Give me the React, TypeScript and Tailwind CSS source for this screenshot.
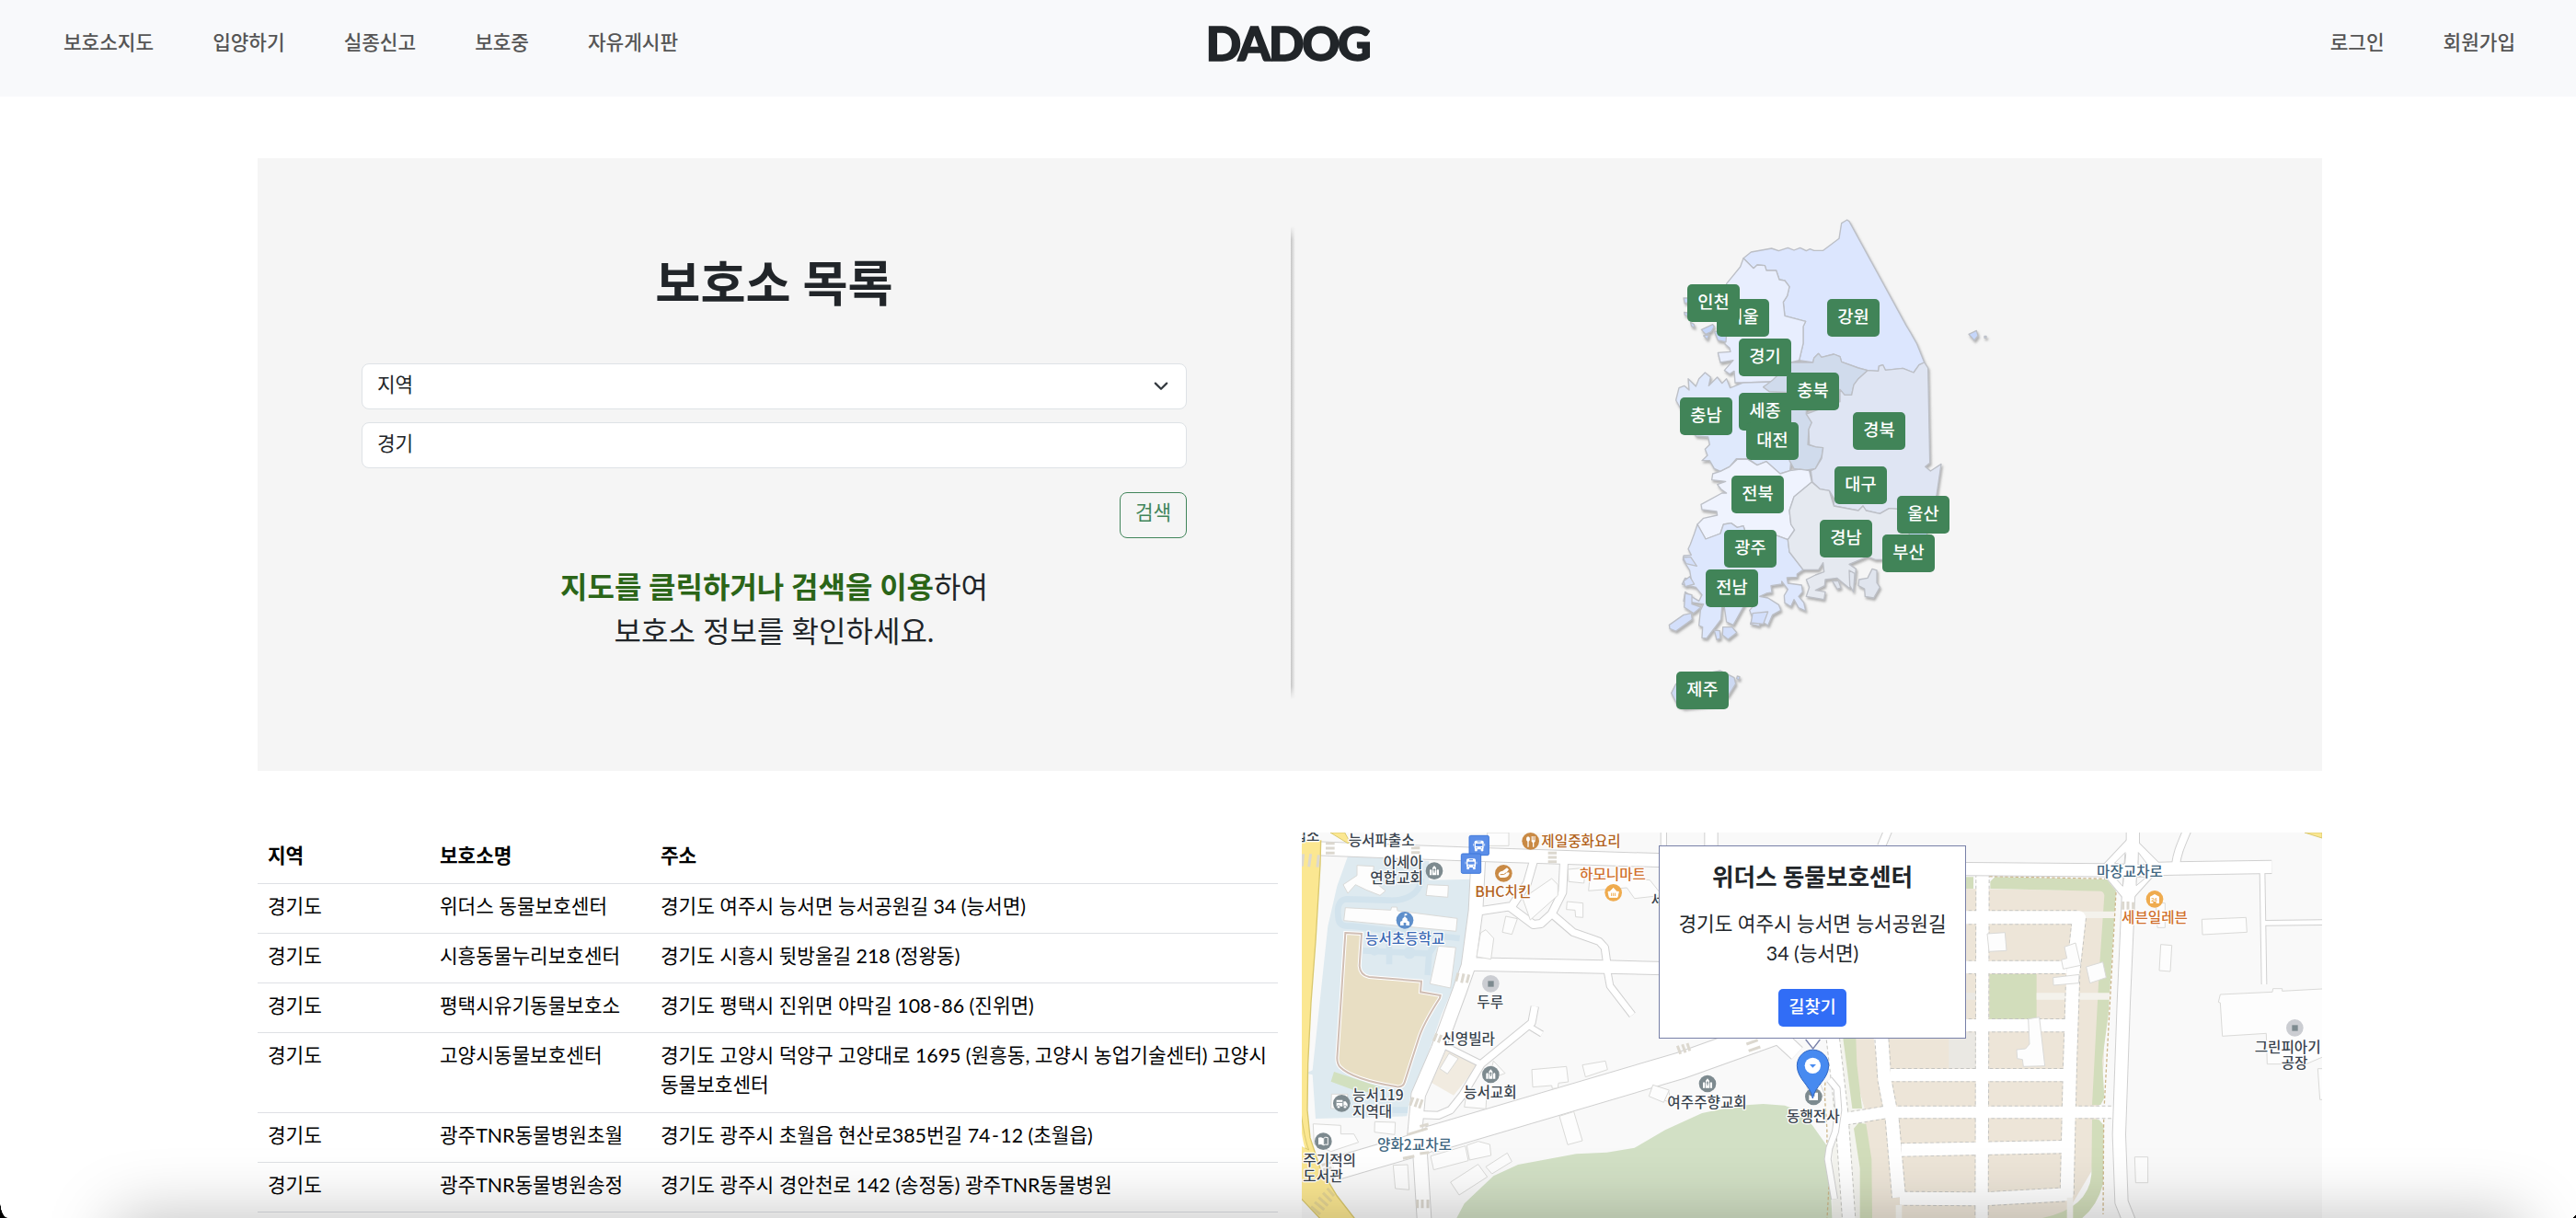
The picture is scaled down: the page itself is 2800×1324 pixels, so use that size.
import React from "react";

const leftNav = ["보호소지도", "입양하기", "실종신고", "보호중", "자유게시판"];
const rightNav = ["로그인", "회원가입"];

const shelters: [string, string, string][] = [
  ["경기도", "위더스 동물보호센터", "경기도 여주시 능서면 능서공원길 34 (능서면)"],
  ["경기도", "시흥동물누리보호센터", "경기도 시흥시 뒷방울길 218 (정왕동)"],
  ["경기도", "평택시유기동물보호소", "경기도 평택시 진위면 야막길 108-86 (진위면)"],
  ["경기도", "고양시동물보호센터", "경기도 고양시 덕양구 고양대로 1695 (원흥동, 고양시 농업기술센터) 고양시 동물보호센터"],
  ["경기도", "광주TNR동물병원초월", "경기도 광주시 초월읍 현산로385번길 74-12 (초월읍)"],
  ["경기도", "광주TNR동물병원송정", "경기도 광주시 경안천로 142 (송정동) 광주TNR동물병원"],
];

/* Region pins, positioned on the map canvas in pixels. */
const regions: [string, number, number][] = [
  ["서울", 86, 104.5],
  ["인천", 54, 88.5],
  ["강원", 206, 104.5],
  ["경기", 110, 147.5],
  ["충북", 162, 184.5],
  ["충남", 46, 211.5],
  ["세종", 110, 206.5],
  ["대전", 118, 238.5],
  ["경북", 234, 227.5],
  ["대구", 214, 286.5],
  ["전북", 102, 296.5],
  ["울산", 282, 318.5],
  ["경남", 198, 344.5],
  ["부산", 266, 360.5],
  ["광주", 94, 355.5],
  ["전남", 74, 398.5],
  ["제주", 42, 510],
];

function Header() {
  return (
    <header className="flex h-[105px] items-start justify-between bg-[#f8f9fb] pr-[66px] pl-[69px]">
      <nav className="flex flex-1 gap-16 pt-[30px] text-[21.33px] leading-8 font-medium text-[#555]">
        {leftNav.map((t) => (
          <a key={t}>{t}</a>
        ))}
      </nav>
      <div className="mr-1 h-[60px] pt-[17px] font-['Lato'] text-[50.5px] leading-[60px] font-black tracking-[-2.2px] text-[#212529] [-webkit-text-stroke:1.6px_#212529]">
        DADOG
      </div>
      <nav className="flex flex-1 justify-end gap-16 pt-[30px] text-[21.33px] leading-8 font-medium text-[#555]">
        {rightNav.map((t) => (
          <a key={t}>{t}</a>
        ))}
      </nav>
    </header>
  );
}

function KoreaMap() {
  return (
    <svg className="block h-[570px] w-[420px]" viewBox="0 0 1260 1710">
      <defs>
        <filter id="landShadow" x="-10%" y="-10%" width="120%" height="120%">
          <feDropShadow dx="4" dy="7" stdDeviation="3" floodColor="#777" floodOpacity="0.55" />
        </filter>
      </defs>
      <g filter="url(#landShadow)" stroke="#bcbfc6" strokeWidth="4" strokeLinejoin="round">
        <path fill="#dce6fe" d="M345 182L370 162 437 150 460 158 490 148 510 156 530 148 550 158 562 152 575 157 605 157 657 118 665 68 683 57 690 62 875 400 890 425 910 460 935 522 918 530 900 555 865 541 808 547 800 530 787 534 785 550 750 548 720 540 665 520 660 503 640 495 600 505 590 493 575 508 572 522 527 515 540 460 540 405 548 388 480 370 475 325 488 305 495 275 480 255 462 252 452 222 420 222 415 206 390 204 378 215Z" />
        <path fill="#e8eefe" d="M345 182L378 215 390 204 415 206 420 222 452 222 462 252 480 255 495 275 488 305 475 325 480 370 548 388 540 405 540 460 527 515 500 522 500 560 440 585 345 588 318 588 315 550 300 560 283 548 312 515 270 522 262 490 303 487 300 475 285 462 290 265 335 210Z" />
        <path fill="#c5d6fb" d="M250 420L290 425 288 455 262 450ZM208 415L245 398 250 405 240 422 222 430ZM150 312h14l2 14-12 4ZM152 358l10 2 2 10-10-2ZM172 390l12 8 2 10-10-4ZM215 435l18-4-6 16Z" />
        <path fill="#dfe9fc" d="M345 588L440 585 410 602 430 617 500 620 500 845 497 875 465 885 445 868 420 845 390 857 360 836 322 836 300 862 270 877 250 868 235 842 210 842 228 825 220 805 235 790 230 765 190 762 150 690 125 645 135 605 152 598 168 612 165 575 190 600 200 575 220 555 238 570 232 598 260 570 275 590 290 575 302 605Z" />
        <path fill="#d0dbec" d="M500 522L572 522 575 508 590 493 600 505 640 495 660 503 665 520 720 540 750 548 720 575 705 595 698 628 675 628 660 610 655 660 550 675 550 690 568 718 558 740 555 790 580 797 605 800 600 830 580 868 545 874 510 868 495 842 500 720 500 620 430 617 410 602 440 580Z" />
        <path fill="#dfe5f3" d="M750 548L785 550 787 534 800 530 808 547 865 541 900 555 918 530 935 522 947 540 953 850 938 862 955 876 990 853 975 955 950 1010 850 1000 820 998 790 1015 745 1005 735 990 720 1005 640 990 640 965 625 940 595 935 570 912 565 875 580 868 600 835 605 800 580 797 560 790 558 740 568 718 550 690 660 650 660 610 675 628 698 628 705 595 720 575Z" />
        <path fill="#eff3fe" d="M270 877L300 862 325 838 360 838 390 857 420 845 465 885 497 875 530 870 560 875 568 912 510 960 495 1005 500 1050 512 1068 490 1100 450 1085 350 1070 345 1055 325 1060 305 1046 280 1050 270 1080 222 1098 195 1050 215 1030 260 1020 258 1008 210 1002 207 985 275 948 290 948 272 935 260 920 287 910 242 905 245 885Z" />
        <path fill="#dde7fd" d="M195 1050L222 1098 270 1080 280 1050 305 1046 325 1060 345 1055 350 1070 450 1085 490 1100 495 1140 540 1198 520 1212 520 1222 487 1224 490 1242 535 1248 538 1270 525 1285 542 1305 548 1332 525 1322 510 1295 500 1318 480 1306 478 1282 490 1262 470 1236 470 1245 435 1250 438 1272 420 1275 398 1285 425 1290 460 1312 467 1330 440 1345 425 1380 400 1362 397 1382 368 1375 375 1355 365 1330 385 1308 350 1310 312 1378 290 1368 283 1320 275 1320 272 1360 225 1422 210 1420 212 1385 200 1380 205 1330 215 1310 150 1300 155 1270 175 1285 200 1300 210 1280 190 1255 145 1245 155 1225 175 1230 170 1200 148 1165 150 1152 175 1150 165 1130 172 1115 185 1080Z" />
        <path fill="#d3dffb" d="M103 1378L150 1345 175 1340 178 1360 125 1398 105 1390ZM155 1275l22 5 0 30 30 10-25 20-30-20ZM148 1158l25-2 20 30-35-8ZM250 1395l18 2 2 25-12 4ZM278 1385l30 0 15 18-28 22-18-14ZM150 1235l20-15 15 25-30 8ZM375 1340l50 -5 -15 40 -40-4Z" />
        <path fill="#e5e9f0" d="M568 912L595 935 625 940 640 990 720 1005 735 990 745 1005 790 1015 820 998 850 1000 940 1080 930 1120 800 1165 775 1165 750 1155 690 1180 712 1195 708 1240 690 1258 668 1240 650 1225 612 1230 610 1250 580 1265 612 1270 608 1295 550 1285 560 1255 550 1230 580 1215 608 1205 605 1175 590 1198 540 1198 495 1140 490 1100 512 1068 500 1050 495 1005 510 960Z" />
        <path fill="#e0e5ee" d="M722 1230L750 1225 765 1195 780 1200 780 1240 790 1255 770 1290 742 1285 740 1260 720 1250ZM690 1200l18 10-4 60-12-20ZM635 1235l20 0 8 22-12 4Z" />
        <path fill="#c5d6fb" d="M885 1075L945 1078 935 1110 890 1120ZM1080 430L1105 418 1110 435 1098 450ZM1131 436l6 0 0 6-6 0ZM325 1545l8 2-2 10-8-4Z" />
        <path fill="#cdd9f2" d="M110 1600L125 1570 240 1533 270 1527 315 1550 320 1570 295 1610 250 1640 150 1650 130 1640Z" />
      </g>
    </svg>
  );
}

function SearchPanel() {
  return (
    <section className="mt-[67px] ml-[280px] flex h-[666px] w-[2244px] bg-[#f5f5f5]">
      <div className="flex w-[1123px] shrink-0 flex-col items-center pt-[103px] text-[#212529]">
        <h1 className="text-[53.33px] leading-[64px] font-bold">보호소 목록</h1>
        <form className="mt-[56px] flex w-[897px] flex-col">
          <div className="flex h-[50px] items-center justify-between rounded-lg border border-[#dee2e6] bg-white pr-[18px] pl-4 text-[21.33px]">
            <span className="-mt-0.5">지역</span>
            <svg className="h-[18px] w-[18px]" viewBox="0 0 16 16" fill="none" stroke="#343a40" strokeWidth="2" strokeLinecap="round" strokeLinejoin="round">
              <path d="M2.500 5L8 10.500l5.500-5.500" />
            </svg>
          </div>
          <div className="mt-[14px] flex h-[50px] items-center rounded-lg border border-[#dee2e6] bg-white px-4 text-[21.33px]">
            <span className="-mt-0.5">경기</span>
          </div>
          <button type="button" className="mt-[26px] h-[50px] w-[73px] self-end rounded-lg border border-[#41855a] pb-1 text-[21.33px] text-[#41855a]">
            검색
          </button>
        </form>
        <p className="mt-[29px] text-center text-[32px] leading-[48px]">
          <b className="font-bold text-[#2b6518]">지도를 클릭하거나 검색을 이용</b>하여
          <br />
          보호소 정보를 확인하세요.
        </p>
      </div>
      <div className="mt-[74px] h-[514px] w-[5px] shrink-0 bg-linear-to-r from-[#c4c4c4] to-[#f5f5f5] [mask-image:linear-gradient(transparent,black_14px,black_calc(100%-14px),transparent)]" />
      <div className="flex-1 pt-12 pl-[372px]">
        <div className="relative h-[570px] w-[420px]">
          <KoreaMap />
          {regions.map(([name, x, y]) => (
            <button
              key={name}
              type="button"
              className="absolute h-[41px] w-[57px] rounded-[5px] bg-[#418458] pb-[3px] text-[18.67px] leading-7 font-medium text-white"
              style={{ left: x, top: y }}
            >
              {name}
            </button>
          ))}
        </div>
      </div>
    </section>
  );
}

/* Gives hyphens in street numbers a little more room. */
function Address({ text }: { text: string }) {
  return (
    <>
      {text.split("-").map((part, i) => (
        <React.Fragment key={part}>
          {i > 0 && <span className="px-[1.5px]">-</span>}
          {part}
        </React.Fragment>
      ))}
    </>
  );
}

function ShelterTable() {
  const cell = "px-[11px] pt-[8px] align-top";
  return (
    <table className="mt-px w-[1109px] table-fixed self-start text-left text-[21.33px] leading-8 text-black">
      <colgroup>
        <col className="w-[187px]" />
        <col className="w-[240px]" />
        <col />
      </colgroup>
      <thead>
        <tr className="h-[54px] border-b border-[#dee0e4] font-bold">
          <th className={cell}>지역</th>
          <th className={cell}>보호소명</th>
          <th className={cell}>주소</th>
        </tr>
      </thead>
      <tbody>
        {shelters.map(([region, name, address], i) => (
          <tr key={name} className={i === 3 ? "h-[87px] border-b border-[#dee0e4]" : "h-[54px] border-b border-[#dee0e4]"}>
            <td className={cell}>{region}</td>
            <td className={cell + " whitespace-nowrap"}>{name}</td>
            <td className={cell}>
              <Address text={address} />
            </td>
          </tr>
        ))}
      </tbody>
    </table>
  );
}

/* Minor roads: path and width. */
const roads: [string, number][] = [
  ["M60 97L600 117 1200 136", 42],
  ["M590 140L582 300 558 480 530 560 460 750 395 900 382 1040", 44],
  ["M400 1080L415 1320", 44],
  ["M560 474L1000 483 1200 488", 40],
  ["M770 140L750 210 700 285 600 300", 24],
  ["M870 140L865 240 830 310 795 342 770 345 690 285", 24],
  ["M830 310L900 370 985 400 1003 420 1010 470", 22],
  ["M1010 490L1020 545 1093 640", 20],
  ["M775 612L765 665 600 800 540 900 500 950 460 967 395 965", 22],
  ["M755 676L798 702", 16],
  ["M480 740L600 800", 18],
  ["M120 1142L400 1060 440 1045", 72],
  ["M430 1047L1250 805 1600 680", 84],
  ["M1195 30L1195 100", 16],
  ["M1350 30L1350 100", 40],
  ["M1930 30L1905 90", 24],
  ["M2100 163L2660 168 2860 162 3178 157", 40],
  ["M2725 30L2725 100 2710 260 2695 600 2680 1030 2688 1250 2720 1330", 40],
  ["M2720 75L2635 165 2705 250", 28],
  ["M2720 75L2800 155 2710 255", 28],
  ["M2905 30C2880 90 2870 110 2865 150", 24],
  ["M3147 170L3153 540", 14],
  ["M3155 340L3400 337", 14],
  ["M1560 700L1630 765", 50],
  ["M1735 850L1760 880 1765 950 1755 1020 1735 1075 1730 1110 1752 1240", 18],
];

/* Planned estate roads, edged with dashes. */
const estate: [string, number][] = [
  ["M1745 700L1775 960 1800 1320", 40],
  ["M1905 700L1915 850 1940 980 1962 1235", 42],
  ["M2235 180L2232 1320", 40],
  ["M2170 322L2550 322 2530 500 2520 800 2510 1225 2240 1240 1965 1238", 42],
  ["M2170 484L2510 484", 40],
  ["M2170 674L2505 674", 40],
  ["M1935 836L2500 836", 40],
  ["M1790 978L1920 957 2660 957", 38],
  ["M1970 1080L2495 1070", 40],
];

const buildings = [
  "M150 215L195 185 195 152 250 155 245 200 288 235 270 250 225 232 190 215 165 243Z",
  "M157 290L305 298 308 288 325 288 327 300 522 325 518 367 152 332Z",
  "M425 215L493 218 491 256 420 250Z", "M460 415L517 420 500 552 433 538Z",
  "M680 318L718 326 700 377 669 370Z", "M598 372L615 362 641 390 632 458 585 450Z",
  "M735 260L830 195 850 215 850 250 760 330Z", "M880 270L932 275 932 322 908 320 906 298 878 296Z",
  "M883 165L940 160 935 210 885 205Z", "M620 45H690V88H620ZM955 185L1150 200 1190 250 1100 260 1075 225 950 235Z",
  "M495 765L525 782 490 832 465 815Z", "M765 818L878 808 884 858 852 862 850 878 832 880 830 870 768 875Z",
  "M930 803L1005 790 1012 818 940 842Z", "M640 790L678 830 625 850Z", "M550 910L618 900 615 946 545 940Z",
  "M1160 870L1210 885 1220 925 1150 905Z", "M855 970L902 955 930 1050 882 1063Z",
  "M435 1100L548 1067 558 1115 445 1145Z", "M553 1065L590 1052 628 1062 632 1098 562 1113Z",
  "M615 1135L685 1090 700 1118 635 1158Z", "M500 1185L590 1127 620 1168 528 1227Z", "M313 1130L360 1128 365 1210 320 1206Z",
  "M253 988L320 990 318 1030 252 1022Z", "M52 995L142 1000 142 1028 185 1028 200 1055 110 1085 55 1060Z",
  "M112 898L165 898 160 945 110 945Z",
  "M1160 868L1213 885 1195 925 1147 905Z", "M1660 870L1700 850 1720 900 1680 920Z",
  "M2250 375L2308 371 2313 430 2256 433Z", "M2502 418L2538 405 2555 478 2498 490 2492 460 2510 455Z",
  "M2573 483L2627 467 2638 518 2585 536Z", "M2465 518L2550 508 2548 536 2466 543Z",
  "M2384 653L2420 647 2438 806 2368 808 2365 785 2348 782 2346 753 2375 750 2388 735Z",
  "M2950 328L3094 322 3097 370 2952 378Z", "M2816 410L2852 413 2847 498 2811 495Z",
  "M2800 275h30v80h-25Z", "M3010 573L3180 565 3182 554 3212 554 3212 562 3360 554 3360 770 3290 800 3163 800 3160 700 3017 709 3010 600 3004 598Z",
  "M3328 815H3360V916H3335Z", "M2731 1103H2774V1187H2734Z",
];

const crossings = [
  "M93 80H122M93 96H122M93 112H122", "M372 95H400M372 110H400M818 112H846M818 126H846M818 140H846",
  "M20 115L16 155M44 115L38 157M70 118L66 158", "M525 503L518 530M543 505L536 535M560 508L553 535",
  "M455 700L445 725M470 705L460 730", "M378 908L368 935M394 912L384 940M408 916L398 944",
  "M400 1003L428 996M360 1030L425 1010M345 1108L382 1100M400 1092L430 1088",
  "M392 1242V1270M408 1242V1270M426 1242V1270", "M80 1130L112 1120M85 1145L112 1138",
  "M1240 740L1250 767M1256 736L1266 763M1272 732L1280 757M1465 735L1502 722M1472 757L1510 744",
  "M2693 270V296M2709 270V296M2726 272V296",
];

/* Place labels: text, left x, vertical centre, colour. */
const labels: [string, number, number, string][] = [
  ["집소", -13, 57, "#39434d"],
  ["능서파출소", 167, 72, "#39434d"],
  ["아세아", 281, 143, "#39434d"],
  ["연합교회", 238, 195, "#39434d"],
  ["능서초등학교", 222, 392, "#3a68b4"],
  ["제일중화요리", 796, 73, "#b3641f"],
  ["BHC치킨", 580, 239, "#b3641f"],
  ["하모니마트", 921, 182, "#d0702c"],
  ["두루", 586, 599, "#39434d"],
  ["신영빌라", 472, 719, "#39434d"],
  ["능서교회", 543, 894, "#39434d"],
  ["능서119", 180, 903, "#39434d"],
  ["지역대", 180, 956, "#39434d"],
  ["양화2교차로", 261, 1063, "#40667f"],
  ["주기적의", 19, 1115, "#39434d"],
  ["도서관", 19, 1167, "#39434d"],
  ["세종", 1154, 265, "#39434d"],
  ["여주주향교회", 1207, 925, "#39434d"],
  ["동행전사", 1596, 970, "#39434d"],
  ["마장교차로", 2607, 173, "#40667f"],
  ["세븐일레븐", 2688, 324, "#d0702c"],
  ["그린피아기", 3122, 745, "#39434d"],
  ["공장", 3209, 798, "#39434d"],
];

function Church({ x, y }: { x: number; y: number }) {
  return (
    <g transform={`translate(${x} ${y})`}>
      <circle r="28" fill="#7d8a8f" />
      <path d="M-15 14V-2l3-4 4 4V14ZM15 14V-2l-3-4-4 4V14ZM-6 14V-10L0-17 6-10V14Z" fill="#fff" />
      <path d="M0-8V6M-4-3H4" stroke="#7d8a8f" strokeWidth="3" />
    </g>
  );
}

function Bus({ x, y }: { x: number; y: number }) {
  return (
    <g transform={`translate(${x} ${y})`}>
      <rect x="-32" y="-32" width="64" height="64" rx="5" fill="#5b8ee8" stroke="#3f77da" strokeWidth="3" />
      <rect x="-15" y="-16" width="30" height="29" rx="5" fill="#fff" />
      <path d="M-11-6H11V3H-11Z" fill="#5b8ee8" />
      <path d="M-13 12v6h6v-6ZM7 12v6h6v-6ZM-18-6v8M18-6v8" fill="#fff" stroke="#fff" strokeWidth="2" />
      <path d="M-10 8h4M6 8h4M-6-12H6" stroke="#5b8ee8" strokeWidth="3" />
    </g>
  );
}

function StreetMap() {
  return (
    <svg className="block h-[419px] w-[1109px]" viewBox="15 45 3327 1257">
      <rect x="0" y="0" width="3400" height="1400" fill="#f9f9f9" />
      <path d="M520 1302L545 1255 640 1165 720 1128 910 1093 1010 1088 1100 1073 1200 1015 1320 960 1440 935 1520 930 1590 935 1630 950 1680 1000 1730 1070 1745 1302Z" fill="#d2e0c5" />
      <path d="M165 122L430 138 430 200 578 197 560 460 500 570 470 640 415 800 370 900 358 970 60 978 50 835 28 830 50 820 100 350 130 220Z" fill="#deeaf0" />
      <path d="M405 195C400 250 350 268 300 266L160 262C130 265 130 300 135 330 140 352 160 350 180 350L300 365 530 390M215 430L440 440M425 510L430 440 455 400M300 400V475M290 950H360" fill="none" stroke="#d2e3ed" strokeWidth="20" />
      <circle cx="252" cy="430" r="16" fill="#d2e3ed" />
      <circle cx="366" cy="437" r="20" fill="#d2e3ed" />
      <path d="M157 372L210 375 203 480Q205 510 235 516L405 530 402 565 467 576 465 585Q410 670 395 720L350 860Q345 876 325 874 180 850 140 810 130 800 130 780L145 560Z" fill="#e8dec3" stroke="#fff" strokeWidth="12" />
      <path d="M157 372L210 375 203 480Q205 510 235 516L405 530 402 565 467 576 465 585Q410 670 395 720L350 860Q345 876 325 874 180 850 140 810 130 800 130 780L145 560Z" fill="none" stroke="#d0beb4" strokeWidth="6" />
      <path d="M120 825L270 875 255 895 185 885 110 857Z" fill="#d2e0bf" />
      <path d="M490 745L590 803 510 902 437 860Z" fill="#f1ebe0" />

      <path d="M1655 716H1780L1880 716 1900 850 1940 1302H1870L1840 1000 1850 950 1790 716ZM1885 716H2176V228L2640 235 2630 800 2590 1150 2500 1302H1940Z" fill="#ede5d8" />
      <path d="M1745 716L1780 716 1850 945 1860 1302 1745 1302Z" fill="#f4f4ef" />
      <path d="M1780 716H1822L1825 800 1842 945 1810 945ZM1815 1010L1830 992 1855 995 1873 1110 1875 1302H1835L1835 1140Z" fill="#d2ddbb" />
      <path d="M2173 190H2205V228H2173ZM2260 228V205L2275 190 2640 198 2670 235 2645 640 2625 790 2632 910 2620 933 2592 933 2615 500 2632 250Q2630 236 2618 236ZM2592 980L2615 982 2630 1000 2628 1190Q2610 1260 2560 1302H2430Q2580 1270 2590 1160ZM2257 507H2411V653H2257Z" fill="#d2ddbb" />
      <path d="M2560 313H2667M2411 579H2652" stroke="#f4f2ec" strokeWidth="22" />
      <path d="M2125 697H2213V815H2125ZM2180 568H2213V590H2180Z" fill="#eae8e3" />

      {estate.map(([d, w]) => (
        <path key={d} d={d} fill="none" stroke="#c4c4c0" strokeWidth={w + 6} strokeDasharray="11 8" strokeLinejoin="round" />
      ))}
      {estate.map(([d, w]) => (
        <path key={d} d={d} fill="none" stroke="#fff" strokeWidth={w} strokeLinejoin="round" />
      ))}
      <path d="M2520 1235V1310M1962 1260V1310" stroke="#f6f5f1" strokeWidth="20" />
      <path d="M2257 188L2640 196M2670 240L2632 930M2630 980L2628 1290M1722 860C1715 930 1735 1000 1725 1090L1735 1180 1728 1302" fill="none" stroke="#cdb78c" strokeWidth="4" strokeDasharray="10 7" />

      {roads.map(([d, w]) => (
        <path key={d} d={d} fill="none" stroke="#d0d0d0" strokeWidth={w + 6} strokeLinejoin="round" />
      ))}
      {roads.map(([d, w]) => (
        <path key={d} d={d} fill="none" stroke="#fff" strokeWidth={w} strokeLinejoin="round" />
      ))}
      <path d="M2665 145L2700 110 2697 148ZM2743 110L2772 148 2742 150ZM2665 190L2692 220 2694 190ZM2737 190L2770 190 2736 218Z" fill="#f9f9f9" stroke="#d0d0d0" strokeWidth="3" />

      <path d="M0 72H77L75 150 60 400 45 600 35 800 33 950 42 1040 75 1140 130 1230 200 1320H90L0 1225Z" fill="#fbe791" stroke="#d9c86f" strokeWidth="4" />
      <path d="M0 860Q20 1040 38 1080L0 1060ZM108 45L165 80 172 76 155 45ZM3285 45L3342 63V45Z" fill="#fbe791" stroke="#d9c86f" strokeWidth="3" />
      <path d="M0 880Q12 1040 26 1075L0 1060Z" fill="#fff" />
      {crossings.map((d) => (
        <path key={d} d={d} stroke="#dcd8cf" strokeWidth="9" />
      ))}
      <path d="M45 1275L75 1300M57 1260L88 1285M70 1245L100 1272M84 1230L112 1258M98 1215L120 1240" transform="translate(0 -10)" stroke="#e6d694" strokeWidth="9" />
      {buildings.map((d) => (
        <path key={d} d={d} fill="#fdfdfd" stroke="#dadad8" strokeWidth="3" />
      ))}

      <Church x={447} y={170} />
      <Church x={631} y={834} />
      <Church x={1338} y={864} />
      <g fill="#7d8a8f">
        <circle cx="145" cy="928" r="28" />
        <circle cx="85" cy="1052" r="28" />
        <circle cx="1684" cy="906" r="28" />
      </g>
      <path d="M128 917H148V938H128ZM151 922H158L164 930V938H151Z" fill="#fff" />
      <circle cx="135" cy="940" r="5" fill="#fff" stroke="#7d8a8f" strokeWidth="2" />
      <circle cx="156" cy="940" r="5" fill="#fff" stroke="#7d8a8f" strokeWidth="2" />
      <path d="M128 925H148" stroke="#7d8a8f" strokeWidth="3" />
      <path d="M69 1040Q78 1036 84 1042V1065Q78 1060 69 1063Z" fill="#fff" />
      <path d="M86 1042Q92 1036 100 1040V1063Q92 1060 86 1065Z" fill="none" stroke="#fff" strokeWidth="3" />
      <path d="M1669 918V900L1678 906V900L1687 906V893H1698V918Z" fill="#fff" />

      <circle cx="351" cy="331" r="28" fill="#5e8fcb" />
      <path d="M336 348V336L343 332V326L351 319 359 326V332L366 336V348H355V339H347V348ZM350 319V310H358V315H352V319Z" fill="#fff" />
      <circle cx="761" cy="73" r="28" fill="#c98a45" />
      <path d="M747 66a6 8 0 1 1 12 0q0 6-4 8V92H751V74q-4-2-4-8ZM764 57H767V70H769V57H772V70H774V57H776V74L772 78V92H768V78L764 74Z" fill="#fff" />
      <circle cx="673" cy="178" r="28" fill="#c98a45" />
      <path d="M656 184Q656 172 670 170L684 160 690 166 682 176Q690 172 692 178 690 190 676 192H662Z" fill="#fff" />
      <path d="M662 182Q676 184 682 176M656 196H690" stroke="#c98a45" strokeWidth="3" fill="none" />
      <circle cx="1031" cy="241" r="28" fill="#efab4e" />
      <path d="M1014 238H1048L1044 256H1018ZM1021 237L1031 226 1041 237" fill="#fff" stroke="#fff" strokeWidth="3" />
      <path d="M1025 242V252M1031 242V252M1037 242V252" stroke="#efab4e" strokeWidth="3" />
      <circle cx="2796" cy="262" r="28" fill="#efab4e" />
      <path d="M2781 276V254L2796 246 2811 254V276H2801V270H2791V276Z" fill="#fff" />
      <text x="2785" y="269" fontSize="17" fontWeight="700" fill="#efab4e">24</text>
      <circle cx="631" cy="538" r="28" fill="#cbcdd2" />
      <path d="M622 529H641V548H622Z" fill="#7d8a8f" />
      <circle cx="3253" cy="682" r="28" fill="#cbcdd2" />
      <path d="M3244 673H3263V692H3244Z" fill="#7d8a8f" />
      <Bus x={593} y={87} />
      <Bus x={567} y={146} />

      {labels.map(([t, x, y, c]) => (
        <text
          key={t}
          x={x}
          y={y + 16}
          fill={c}
          stroke="#fff"
          strokeWidth="7"
          strokeLinejoin="round"
          paintOrder="stroke"
          className="font-['Noto_Sans_CJK_KR',sans-serif] text-[47px] font-medium"
        >
          {t}
        </text>
      ))}

      <path d="M1658 712L1682 750 1706 712Z" fill="#fff" />
      <path d="M1658 720L1682 750 1705 720" fill="none" stroke="#7880a8" strokeWidth="4" />
      <path d="M1681 912C1675 870 1630 850 1630 805a51.500 51.500 0 0 1 103 0C1733 850 1688 870 1681 912Z" fill="#478af0" stroke="#2f66c4" strokeWidth="3" />
      <circle cx="1681" cy="805" r="26" fill="#fff" />
      <path d="M1671 801H1692L1681 812Z" fill="#478af0" />
    </svg>
  );
}

function MapView() {
  return (
    <div className="relative h-[419px] w-[1109px] overflow-hidden">
      <StreetMap />
      <div className="absolute top-[14px] left-[388px] flex h-[210px] w-[334px] flex-col items-center border border-[#7880a8] bg-white pt-[14px] text-center text-[#212529]">
        <h2 className="text-[25.6px] leading-[38px] font-bold">위더스 동물보호센터</h2>
        <p className="mt-4 w-[300px] text-[21.33px] leading-8">경기도 여주시 능서면 능서공원길 34 (능서면)</p>
        <button type="button" className="mt-[23px] h-[41px] w-[74px] rounded-[5px] bg-[#316df6] pb-[3px] text-[18.67px] leading-7 font-medium text-white">
          길찾기
        </button>
      </div>
    </div>
  );
}

export default function App() {
  return (
    <div className="relative h-[1324px] w-[2800px] overflow-hidden bg-white font-['Lato','Noto_Sans_CJK_KR',sans-serif] break-keep">
      <Header />
      <SearchPanel />
      <section className="mt-[67px] ml-[280px] flex h-[419px] w-[2244px] justify-between">
        <ShelterTable />
        <MapView />
      </section>
      <div className="pointer-events-none absolute top-full right-[58px] left-[125px] h-40 shadow-[0_0_72px_rgba(0,0,0,0.26)]" />
      <div className="absolute bottom-0 left-0 h-[19px] w-2 bg-[radial-gradient(ellipse_8px_19px_at_100%_0,transparent_96%,#000_100%)]" />
      <div className="absolute right-0 bottom-0 h-1 w-1 bg-[linear-gradient(135deg,transparent_50%,#000_52%)]" />
    </div>
  );
}
